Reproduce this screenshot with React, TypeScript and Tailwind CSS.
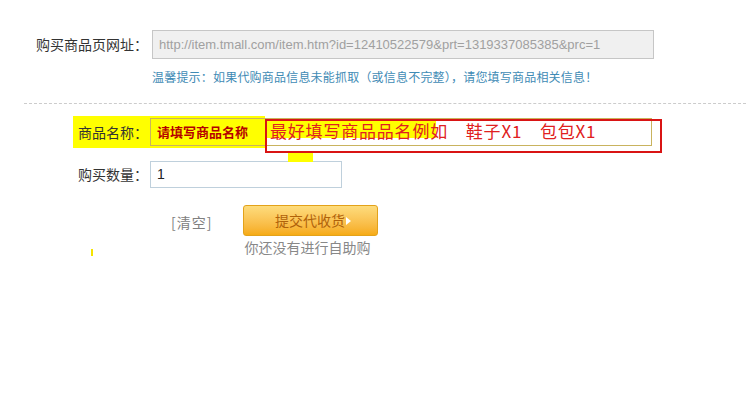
import React from 'react';

const cn = '"Noto Sans CJK SC", "Liberation Sans", sans-serif';

export default function App() {
  return (
    <div
      className="relative w-[746px] h-[414px] overflow-hidden bg-white text-[#333]"
      style={{ fontFamily: cn }}
    >
      {/* Row 1: url */}
      <div className="flex items-center pt-[30px]">
        <label className="w-[148px] text-right text-[14px] leading-[29px]">购买商品页网址：</label>
        <div className="ml-[4px] w-[502px] h-[29px] border border-[#c6c6c6] bg-[#f0f0f0] pl-[6px] flex items-center text-[13px] text-[#a0a0a0] font-['Liberation_Sans',sans-serif] whitespace-nowrap overflow-hidden">
          http://item.tmall.com/item.htm?id=12410522579&amp;prt=1319337085385&amp;prc=1
        </div>
      </div>

      <p className="ml-[152px] mt-[10px] text-[12px] leading-[16px] tracking-[0.2px] text-[#3f8bb5] whitespace-nowrap">
        温馨提示：如果代购商品信息未能抓取（或信息不完整），请您填写商品相关信息！
      </p>

      <div className="ml-[24px] mt-[18px] border-t border-dashed border-[#cccccc]" />

      {/* Row 2: product name */}
      <div className="relative mt-[12px] h-[32px] flex items-center">
        <div className="absolute left-[73px] top-0 w-[192px] h-[32px] bg-[#ffff00]" />
        <label className="relative w-[148px] text-right text-[14px]">商品名称：</label>
        <div className="relative ml-[2px] w-[502px] h-[28px] border border-[#c9b35e] pl-[6px] flex items-center text-[13px] font-bold text-[#b50000]">
          请填写商品名称
        </div>
      </div>

      {/* Row 3: quantity */}
      <div className="flex items-center mt-[13px]">
        <label className="w-[148px] text-right text-[14px]">购买数量：</label>
        <div className="ml-[2px] w-[192px] h-[27px] border border-[#bfd0dc] pl-[6px] flex items-center text-[14px] text-[#222] font-['Liberation_Sans',sans-serif]">
          1
        </div>
      </div>

      {/* Row 4: actions */}
      <div className="flex items-start mt-[17px]">
        <span className="ml-[171px] mt-[8px] text-[14px] leading-[18px] tracking-[1px] text-[#808080]">[清空]</span>
        <div className="ml-[31px] flex flex-col">
          <button className="w-[135px] h-[31px] rounded-[3px] border border-[#e3a21a] bg-gradient-to-b from-[#fddc7c] to-[#f6ab12] flex items-center justify-center pl-[4px] text-[14px] text-[#b0620a]">
            提交代收货
            <svg width="5" height="8" viewBox="0 0 5 8" className="ml-[1px]">
              <path d="M0 0 L5 4 L0 8 Z" fill="#ffffff" />
            </svg>
          </button>
          <span className="ml-[1px] mt-[2px] text-[14px] leading-[18px] text-[#888888] whitespace-nowrap">你还没有进行自助购</span>
        </div>
      </div>

      {/* annotations */}
      <div className="absolute left-[91px] top-[249px] w-[2px] h-[7px] bg-[#f5e400]" />
      <div className="absolute left-[288px] top-[152px] w-[25px] h-[10px] bg-[#ffff00]" />
      <div className="absolute left-[265px] top-[119px] w-[397px] h-[34px] border-2 border-[#d91414]">
        <div className="absolute left-0 top-0 w-[169px] h-[17px] bg-[#ffff00]" />
        <span className="relative block pl-[3px] -mt-[1px] text-[17px] leading-[22px] tracking-[0.8px] text-[#e02020] whitespace-pre">
          最好填写商品品名例如　鞋子X1　包包X1
        </span>
      </div>
    </div>
  );
}
